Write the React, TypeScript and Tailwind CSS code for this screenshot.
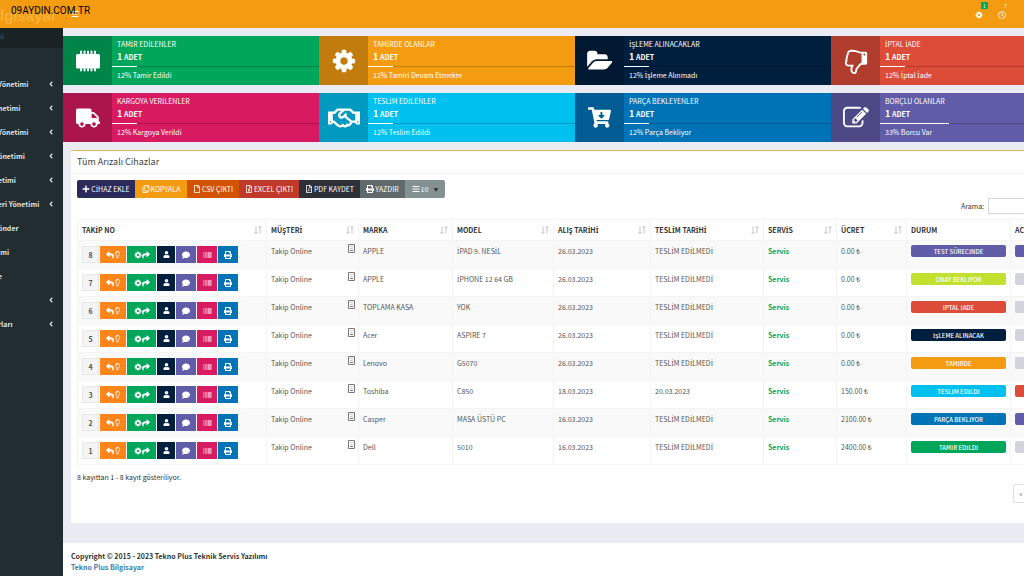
import { Fragment } from "react";
import type { ReactNode } from "react";
import {
  FaAngleLeft, FaBarcode, FaBars, FaCartArrowDown, FaComment, FaPlus, FaPrint, FaRegClock,
  FaRegCopy, FaRegFile, FaRegFileExcel, FaRegFilePdf, FaRegHandshake, FaRegLightbulb,
  FaReply, FaShare, FaTruck, FaUser,
} from "react-icons/fa";

const COG =
  "M1152 896q0-106-75-181t-181-75-181 75-75 181 75 181 181 75 181-75 75-181zm512-109v222q0 12-8 23t-20 13l-185 28q-19 54-39 91 35 50 107 138 10 12 10 25t-9 23q-27 37-99 108t-94 71q-12 0-26-9l-138-108q-44 23-91 38-16 136-29 186-7 28-36 28h-222q-14 0-24.5-8.5t-11.5-21.5l-28-184q-49-16-90-37l-141 107q-10 9-25 9-14 0-25-11-126-114-165-168-7-10-7-23 0-12 8-23 15-21 51-66.5t54-70.5q-27-50-41-99l-183-27q-13-2-21-12.5t-8-23.5v-222q0-12 8-23t19-13l186-28q14-46 39-92-40-57-107-138-10-12-10-24 0-10 9-23 26-36 98.5-107.5t94.5-71.5q13 0 26 10l138 107q44-23 91-38 16-136 29-186 7-28 36-28h222q14 0 24.5 8.5t11.5 21.5l28 184q49 16 90 37l142-107q9-9 24-9 13 0 25 10 129 119 165 170 7 8 7 22 0 12-8 23-15 21-51 66.5t-54 70.5q26 50 41 98l183 28q13 2 21 12.5t8 23.5z";
const EDIT =
  "M888 1184l116-116-152-152-116 116v56h96v96h56zm440-720q-16-16-33 1l-350 350q-17 17-1 33t33-1l350-350q17-17 1-33zm80 594v190q0 119-84.5 203.5t-203.5 84.5h-832q-119 0-203.5-84.5t-84.5-203.5v-832q0-119 84.5-203.5t203.5-84.5h832q63 0 117 25 15 7 18 23 3 17-9 29l-49 49q-14 14-32 8-23-6-45-6h-832q-66 0-113 47t-47 113v832q0 66 47 113t113 47h832q66 0 113-47t47-113v-126q0-13 9-22l64-64q15-15 35-7t20 29zm-96-738l288 288-672 672h-288v-288zm444 132l-92 92-288-288 92-92q28-28 68-28t68 28l152 152q28 28 28 68t-28 68z";
const FOLDER =
  "M1943 952q0 31-31 66l-336 396q-43 51-120.5 86.5t-143.5 35.5h-1088q-34 0-60.5-13t-26.5-43q0-31 31-66l336-396q43-51 120.5-86.5t143.5-35.5h1088q34 0 60.5 13t26.5 43zm-343-344v160h-832q-94 0-197 47.5t-164 119.5l-337 396-5 6q0-4-.5-12.5t-.5-12.5v-960q0-92 66-158t158-66h320q92 0 158 66t66 158v32h544q92 0 158 66t66 158z";
const THUMB =
  "M384 448q0-26-19-45t-45-19-45 19-19 45 19 45 45 19 45-19 19-45zm1152 576q0-35-21.5-81t-53.5-47q15-17 25-47.5t10-55.5q0-69-53-119 18-31 18-69 0-37-17.5-73.5t-47.5-52.5q5-30 5-56 0-85-49-126t-136-41h-128q-131 0-342 73-5 2-29 10.5t-35.5 12.5-35 11.5-38 10.5-31 6.5-32.5 2.5h-32v640h32q16 0 35.5 9t40 27 38.5 35.5 40 44 34.5 42.5 31.5 41 23 30q55 68 77 91 41 43 59.5 109.5t30.5 125.5 38 85q96 0 128-47t32-145q0-59-48-160.5t-48-159.5h352q50 0 89-38.5t39-89.500zm128 1q0 103-76 179t-180 76h-176q48 99 48 192 0 118-35 186-35 69-102 101.5t-151 32.5q-51 0-90-37-34-33-54-82t-25.5-90.5-17.5-84.5-31-64q-48-50-107-127-101-131-137-155h-274q-53 0-90.5-37.5t-37.5-90.5v-640q0-53 37.5-90.5t90.5-37.5h288q22 0 138-40 128-44 223-66t200-22h112q140 0 226.5 79t85.500 216v5q60 77 60 178 0 22-3 43 38 67 38 145 0 36-9 69 49 73 49 163z";

function Glyph({ d, size }: { d: string; size: string }) {
  return <svg viewBox="0 0 1792 1792" className={size} fill="currentColor"><path d={d} /></svg>;
}

/* The main family has no dotted capital I, so that letter names its own family. */
function T({ children }: { children: string }) {
  const parts = children.split("İ");
  return (
    <span>
      {parts.map((part, i) => (
        <Fragment key={i}>
          {i > 0 && <span className="font-['Noto_Sans',sans-serif] leading-none">İ</span>}
          {part}
        </Fragment>
      ))}
    </span>
  );
}

function Chip() {
  return (
    <svg viewBox="0 0 24 22" className="h-[22px] w-6" fill="currentColor">
      <rect x="0" y="4" width="24" height="14.500" rx="1.500" />
      {[4, 7.5, 11, 14.5, 18].map((x) => (
        <g key={x}>
          <rect x={x} y="0.500" width="2" height="4" rx="1" />
          <rect x={x} y="18" width="2" height="3.500" rx="1" />
        </g>
      ))}
    </svg>
  );
}

type Card = { title: string; note: string; bg: string; bar: string; icon: ReactNode };

const cards: Card[] = [
  { title: "TAMİR EDİLENLER", note: "12% Tamir Edildi", bg: "bg-[#00a65a]", bar: "w-[12%]", icon: <Chip /> },
  { title: "TAMİRDE OLANLAR", note: "12% Tamiri Devam Etmekte", bg: "bg-[#f39c12]", bar: "w-[12%]", icon: <Glyph d={COG} size="size-[26px]" /> },
  {
    title: "İŞLEME ALINACAKLAR", note: "12% İşleme Alınmadı", bg: "bg-[#001f3f]", bar: "w-[12%]",
    icon: <svg viewBox="0 0 2048 1792" className="h-6 w-7" fill="currentColor"><path d={FOLDER} /></svg>,
  },
  { title: "İPTAL İADE", note: "12% İptal İade", bg: "bg-[#dd4b39]", bar: "w-[12%]", icon: <Glyph d={THUMB} size="size-[26px] -scale-x-100" /> },
  { title: "KARGOYA VERİLENLER", note: "12% Kargoya Verildi", bg: "bg-[#d81b60]", bar: "w-[12%]", icon: <FaTruck className="size-6" /> },
  { title: "TESLİM EDİLENLER", note: "12% Teslim Edildi", bg: "bg-[#00c0ef]", bar: "w-[12%]", icon: <FaRegHandshake className="size-8" /> },
  { title: "PARÇA BEKLEYENLER", note: "12% Parça Bekliyor", bg: "bg-[#0073b7]", bar: "w-[12%]", icon: <FaCartArrowDown className="size-[23px]" /> },
  { title: "BORÇLU OLANLAR", note: "33% Borcu Var", bg: "bg-[#605ca8]", bar: "w-1/3", icon: <Glyph d={EDIT} size="size-[26px]" /> },
];

const menu: [string, boolean][] = [
  ["Yönetimi", true], ["netimi", true], ["Yönetimi", true], ["önetimi", true], ["etimi", true],
  ["eri Yönetimi", true], ["önder", false], ["imi", false], ["e", false], ["", true], ["rları", true],
];

const tools: { text: string; style: string; icon: ReactNode }[] = [
  { text: "CİHAZ EKLE", style: "w-[58px] bg-[#2b2a5b] rounded-l-xs", icon: <FaPlus /> },
  { text: "KOPYALA", style: "w-[52px] bg-[#f39c12]", icon: <FaRegCopy /> },
  { text: "CSV ÇIKTI", style: "w-[52px] bg-[#d35400]", icon: <FaRegFile /> },
  { text: "EXCEL ÇIKTI", style: "w-[60px] bg-[#c0392b]", icon: <FaRegFileExcel /> },
  { text: "PDF KAYDET", style: "w-[61px] bg-[#2c3039]", icon: <FaRegFilePdf /> },
  { text: "YAZDIR", style: "w-[45px] bg-[#616a6b]", icon: <FaPrint /> },
];

const columns: [string, string][] = [
  ["TAKİP NO", "w-[189px]"], ["MÜŞTERİ", "w-[92px]"], ["MARKA", "w-[94px]"], ["MODEL", "w-[101px]"],
  ["ALIŞ TARİHİ", "w-[97px]"], ["TESLİM TARİHİ", "w-[113px]"], ["SERVİS", "w-[73px]"], ["ÜCRET", "w-[70px]"],
  ["DURUM", "w-[104px]"], ["ACİL", "w-[80px]"],
];

const NONE = "TESLİM EDİLMEDİ";
const rows: { no: number; brand: string; model: string; date: string; out: string; fee: string; state: string; color: string; flag: string }[] = [
  { no: 8, brand: "APPLE", model: "İPAD 9. NESİL", date: "26.03.2023", out: NONE, fee: "0.00 ₺", state: "TEST SÜRECİNDE", color: "bg-[#605ca8]", flag: "bg-[#605ca8]" },
  { no: 7, brand: "APPLE", model: "İPHONE 12 64 GB", date: "26.03.2023", out: NONE, fee: "0.00 ₺", state: "ONAY BEKLİYOR", color: "bg-[#c1e02f]", flag: "bg-[#d2d3dd]" },
  { no: 6, brand: "TOPLAMA KASA", model: "YOK", date: "26.03.2023", out: NONE, fee: "0.00 ₺", state: "İPTAL İADE", color: "bg-[#dd4b39]", flag: "bg-[#d2d3dd]" },
  { no: 5, brand: "Acer", model: "ASPIRE 7", date: "26.03.2023", out: NONE, fee: "0.00 ₺", state: "İŞLEME ALINACAK", color: "bg-[#001f3f]", flag: "bg-[#d2d3dd]" },
  { no: 4, brand: "Lenovo", model: "G5070", date: "26.03.2023", out: NONE, fee: "0.00 ₺", state: "TAMİRDE", color: "bg-[#f39c12]", flag: "bg-[#d2d3dd]" },
  { no: 3, brand: "Toshiba", model: "C850", date: "18.03.2023", out: "20.03.2023", fee: "150.00 ₺", state: "TESLİM EDİLDİ", color: "bg-[#00c0ef]", flag: "bg-[#dd4b39]" },
  { no: 2, brand: "Casper", model: "MASA ÜSTÜ PC", date: "16.03.2023", out: NONE, fee: "2100.00 ₺", state: "PARÇA BEKLİYOR", color: "bg-[#0073b7]", flag: "bg-[#605ca8]" },
  { no: 1, brand: "Dell", model: "5010", date: "16.03.2023", out: NONE, fee: "2400.00 ₺", state: "TAMİR EDİLDİ", color: "bg-[#00a65a]", flag: "bg-[#d2d3dd]" },
];

const actions: { label: string; style: string; icon: ReactNode }[] = [
  { label: "Geri al", style: "w-[26px] bg-[#ff851b]", icon: <><FaReply /><FaRegLightbulb className="size-[7px]" /></> },
  { label: "Yönlendir", style: "w-[29px] bg-[#00a65a]", icon: <><Glyph d={COG} size="size-2" /><FaShare /></> },
  { label: "Müşteri", style: "w-[18px] bg-[#001f3f]", icon: <FaUser className="size-[7px]" /> },
  { label: "Mesaj", style: "w-5 bg-[#605ca8]", icon: <FaComment /> },
  { label: "Barkod", style: "w-5 bg-[#d81b60]", icon: <FaBarcode className="h-2 w-[9px]" /> },
  { label: "Yazdır", style: "w-5 bg-[#0073b7]", icon: <FaPrint /> },
];

function SortIcon() {
  return (
    <svg viewBox="0 0 8 8" className="size-2 text-[#c4c4c4]" fill="none" stroke="currentColor" strokeWidth="1">
      <path d="M2 .5v7M.5 6L2 7.500 3.500 6M6 7.500v-7M4.500 2L6 .5 7.500 2" />
    </svg>
  );
}

function DeviceIcon() {
  return (
    <svg viewBox="0 0 8 9" className="-mt-px h-[9px] w-2 text-[#777]" fill="none" stroke="currentColor" strokeWidth="1">
      <path d="M1.500 .5h6v8h-6z" />
      <path d="M3 6.500h3" />
      <path d="M3 2.500h3M3 4.500h3" strokeWidth=".5" strokeDasharray=".7 .5" />
    </svg>
  );
}

function InfoCard({ card }: { card: Card }) {
  return (
    <div className={`flex h-[49px] text-white ${card.bg}`}>
      <div className="flex w-[49px] shrink-0 items-center justify-center bg-black/20">{card.icon}</div>
      <div className="flex min-w-0 flex-1 flex-col">
        <div className="px-[5px] pt-[3px] leading-[10px]"><T>{card.title}</T></div>
        <div className="px-[5px] pt-[2px] font-bold leading-[12px]">
          <span className="text-[9px]">1</span> ADET
        </div>
        <div className="mt-[3px] h-px bg-black/20">
          <div className={`h-px bg-white ${card.bar}`} />
        </div>
        <div className="px-[5px] pt-[3px] leading-[10px]"><T>{card.note}</T></div>
      </div>
    </div>
  );
}

export default function App() {
  return (
    <div lang="tr" className="flex min-h-screen flex-col overflow-hidden bg-[#ebecf3] font-['Noto_Sans_CJK_SC','Noto_Sans',sans-serif] text-[7px] text-[#333]">
      <header className="relative flex h-7 shrink-0 items-center bg-[#f39c12] text-white">
        <div className="w-[63px] pt-1 font-['Liberation_Sans',sans-serif] text-[15px] font-bold text-[#f7b135]">lgisayar</div>
        <button aria-label="Menü" className="ml-2"><FaBars className="size-2" /></button>
        <div className="absolute left-[11px] top-1 font-['Roboto',sans-serif] text-[10px] leading-[13px] text-black">09AYDIN.COM.TR</div>
        <div className="ml-auto flex gap-[15px] pr-[18px] pt-[2px]">
          <button aria-label="Ayarlar" className="relative">
            <Glyph d={COG} size="size-2" />
            <span className="absolute -top-[9px] left-[6px] rounded-[1px] bg-[#00a65a] px-[2px] text-[5px] leading-[7px]">1</span>
          </button>
          <button aria-label="Bekleyenler" className="relative">
            <FaRegClock className="size-2" />
            <span className="absolute -top-[9px] left-[6px] text-[5px] leading-[7px]">7</span>
          </button>
        </div>
      </header>

      <div className="flex flex-1">
        <aside className="w-[63px] shrink-0 overflow-hidden bg-[#222d32] font-bold text-[#dbe3e6]">
          <div className="h-5 bg-[#1a2226] pt-1 text-[6px] font-normal text-[#4b646f]">ü</div>
          <nav className="-ml-0.5 pt-6">
            {menu.map(([text, open], i) => (
              <a key={i} href="#" aria-label={text || "Menü"} className="flex h-6 items-center justify-between pr-2">
                <span className="whitespace-nowrap">{text}</span>
                {open && <FaAngleLeft className="size-2" />}
              </a>
            ))}
          </nav>
        </aside>

        <div className="flex min-w-0 flex-1 flex-col overflow-hidden">
          <main className="min-w-[1024px] pb-5">
            <section className="grid grid-cols-4 gap-y-2 pt-2">
              {cards.map((c) => <InfoCard key={c.title} card={c} />)}
            </section>

            <section className="mx-2 mt-2 border-t border-[#e3b74f] bg-white">
              <h2 className="border-b border-[#f4f4f4] px-[6px] text-[9px] leading-[22px] text-[#444]">Tüm Arızalı Cihazlar</h2>
              <div className="px-[6px] pb-5 pt-[6px]">
                <div className="flex h-[18px] text-white">
                  {tools.map((t) => (
                    <button key={t.text} className={`flex items-center justify-center gap-px whitespace-nowrap ${t.style}`}>
                      <span className="text-[8px]">{t.icon}</span><T>{t.text}</T>
                    </button>
                  ))}
                  <button className="flex w-10 items-center justify-center gap-px rounded-r-xs bg-[#839192]">
                    <FaBars className="size-2" />10<span className="ml-1 text-[5px] text-[#333]">▼</span>
                  </button>
                </div>
                <div className="flex items-center pl-[884px]">
                  <label htmlFor="search" className="w-[27px]">Arama:</label>
                  <input id="search" className="h-4 w-20 border border-[#d2d6de] bg-white px-1 outline-none" />
                </div>
                <table className="mt-[5px] w-[1013px] table-fixed border-collapse text-left">
                  <thead>
                    <tr className="h-[21px]">
                      {columns.map(([name, width], i) => (
                        <th key={name} className={`border border-[#f4f4f4] px-1 py-0 font-bold ${width}`}>
                          <div className="flex items-center justify-between">
                            <T>{name}</T>
                            {i < 8 && <SortIcon />}
                          </div>
                        </th>
                      ))}
                    </tr>
                  </thead>
                  <tbody className="align-top leading-[12px] text-[#555]">
                    {rows.map((r) => (
                      <tr key={r.no} className="h-7 odd:bg-[#f9f9f9] [&>td]:border [&>td]:border-[#f4f4f4] [&>td]:px-1 [&>td]:pb-0 [&>td]:pt-1">
                        <td>
                          <div className="flex gap-px pt-px">
                            <span className="flex h-[17px] w-[17px] items-center justify-center border border-[#e7e7e7] bg-[#f4f4f4] font-bold">{r.no}</span>
                            {actions.map((a) => (
                              <button key={a.label} aria-label={a.label} className={`flex h-[17px] items-center justify-center text-[8px] text-white ${a.style}`}>{a.icon}</button>
                            ))}
                          </div>
                        </td>
                        <td>
                          <div className="-mr-px flex justify-between">Takip Online<DeviceIcon /></div>
                        </td>
                        <td>{r.brand}</td>
                        <td><T>{r.model}</T></td>
                        <td>{r.date}</td>
                        <td><T>{r.out}</T></td>
                        <td className="font-bold text-[#00a65a]">Servis</td>
                        <td>{r.fee}</td>
                        <td><div className={`rounded-xs pt-px text-center text-[6px] font-medium leading-[11px] text-white ${r.color}`}><T>{r.state}</T></div></td>
                        <td><div className={`h-3 rounded-xs ${r.flag}`} /></td>
                      </tr>
                    ))}
                  </tbody>
                </table>
                <p className="pt-[6px] leading-[12px]">8 kayıttan 1 - 8 kayıt gösteriliyor.</p>
                <div className="pl-[936px] pt-px">
                  <button className="h-[19px] w-4 rounded-l-xs border border-[#ddd] text-[#777]">«</button>
                </div>
              </div>
            </section>
          </main>
          <footer className="flex-1 bg-white px-2 pt-2 font-bold leading-[11px]">
            <p>Copyright © 2015 - 2023 Tekno Plus Teknik Servis Yazılımı</p>
            <a href="#" className="text-[#3c7dac]">Tekno Plus Bilgisayar</a>
          </footer>
        </div>
      </div>
    </div>
  );
}
